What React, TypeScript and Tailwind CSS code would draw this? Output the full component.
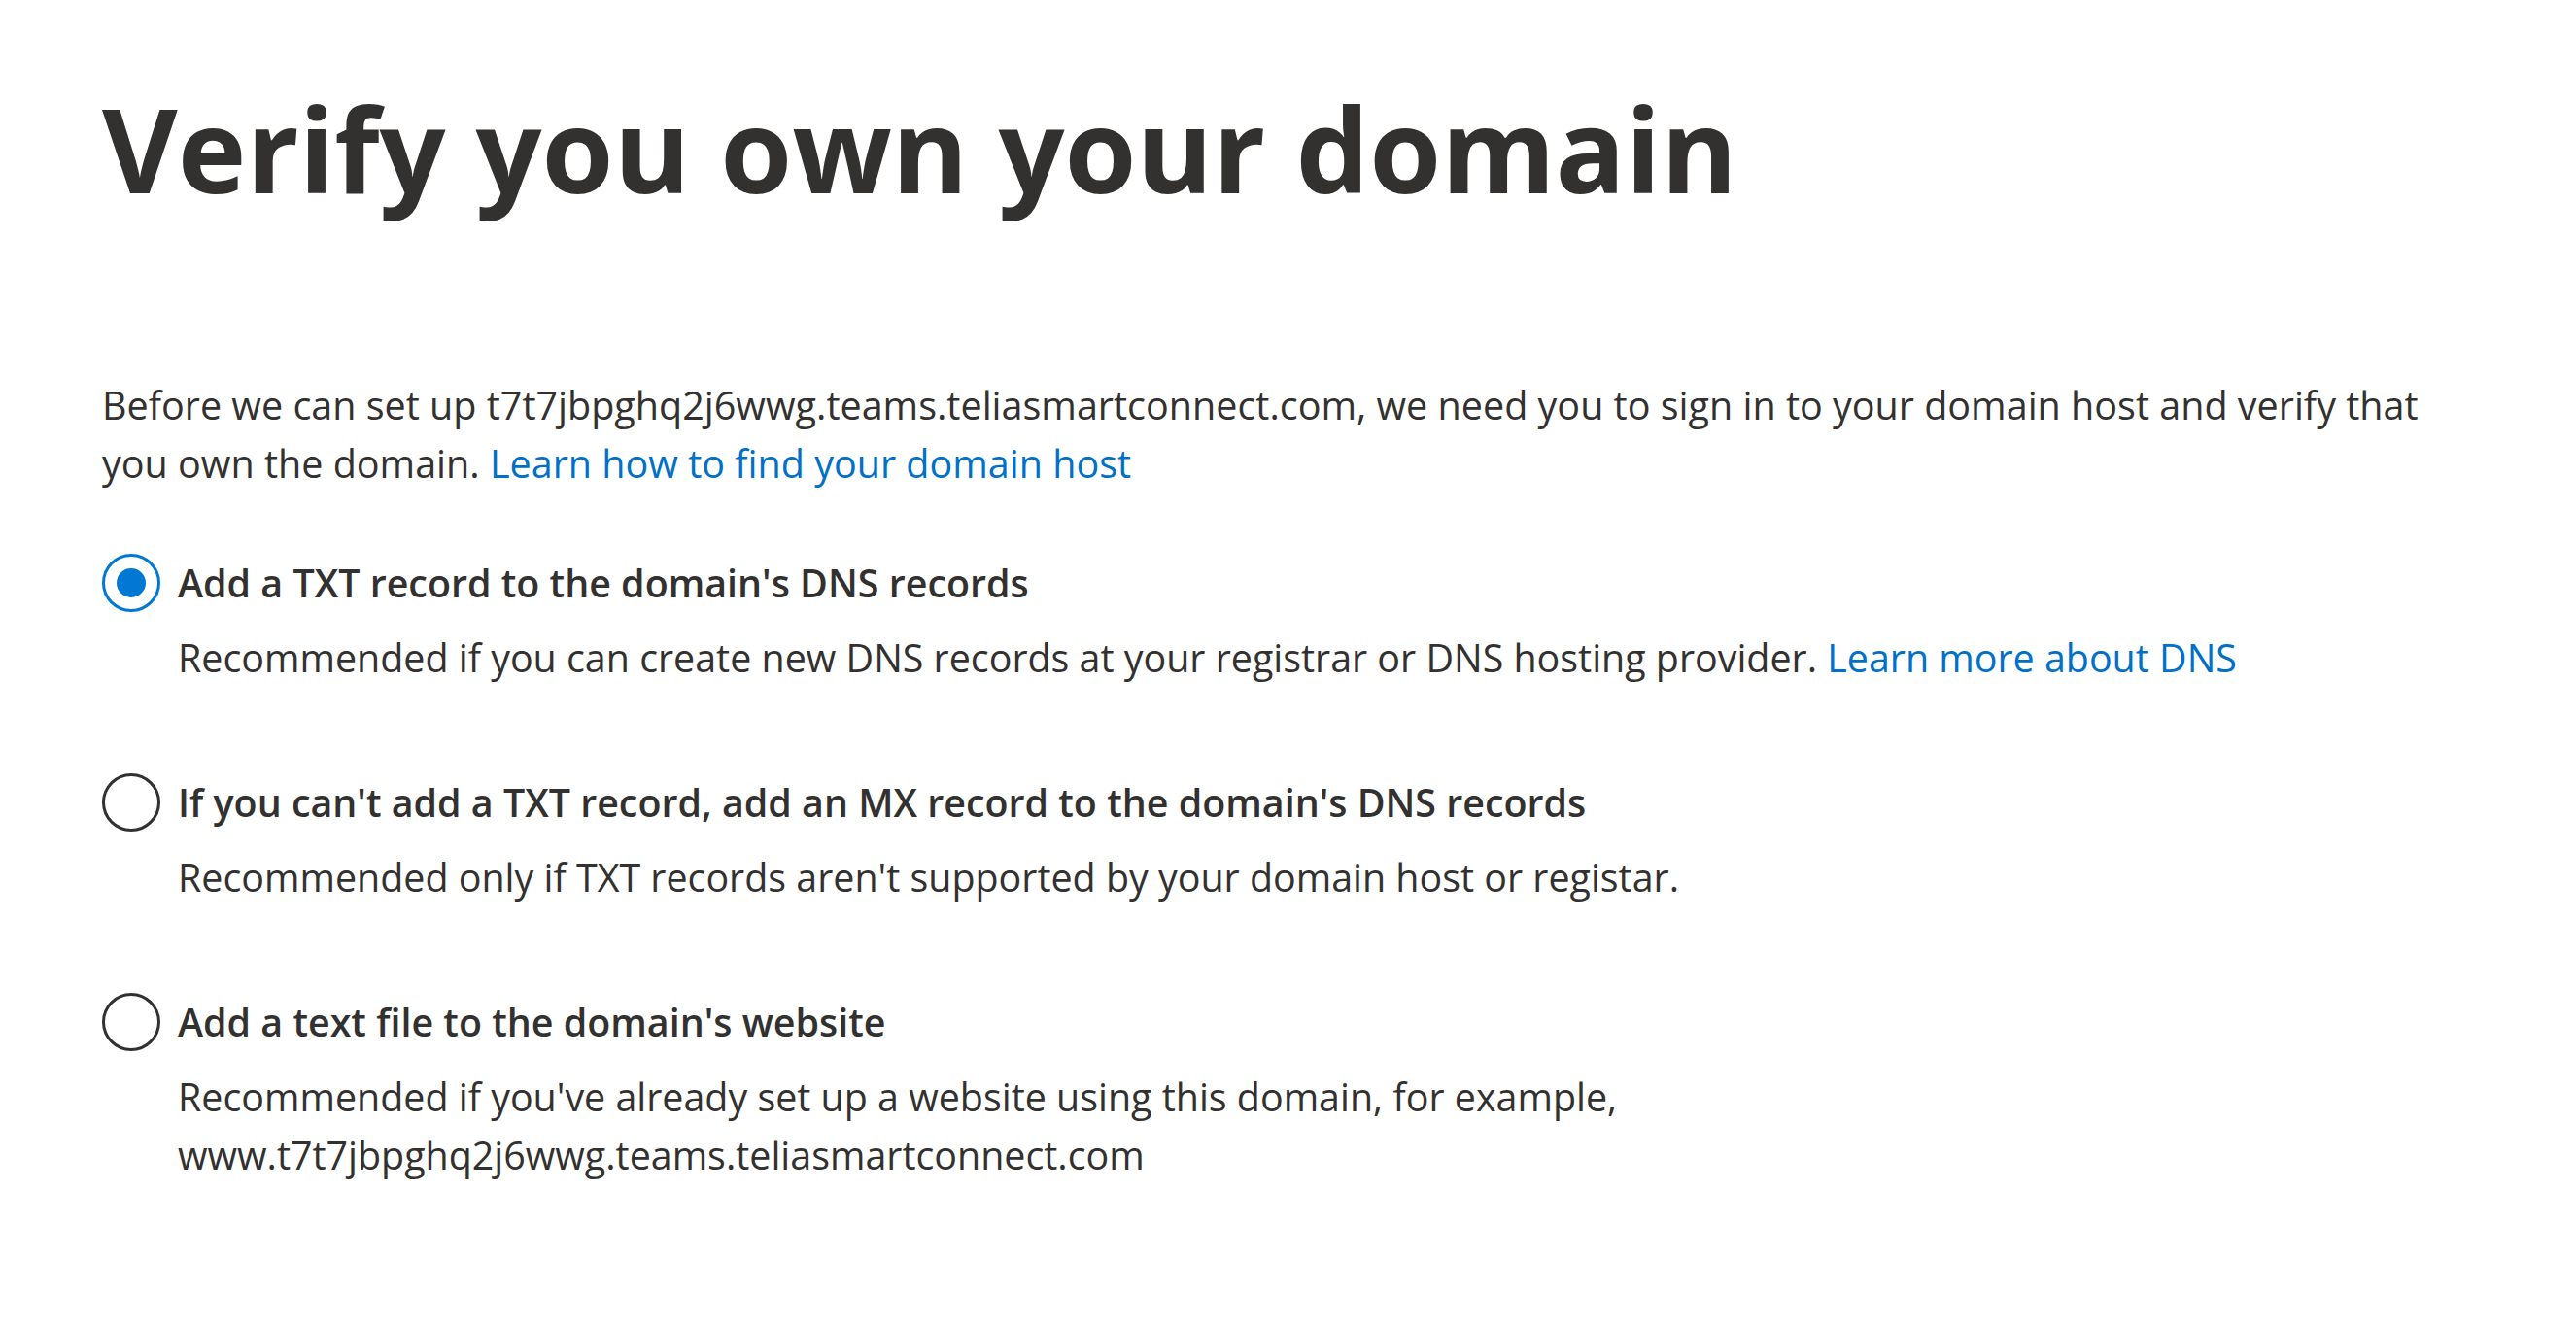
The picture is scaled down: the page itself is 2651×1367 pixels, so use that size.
import { useState } from "react";

type Option = {
  id: string;
  label: string;
  description: React.ReactNode;
};

const domain = "t7t7jbpghq2j6wwg.teams.teliasmartconnect.com";

const options: Option[] = [
  {
    id: "txt",
    label: "Add a TXT record to the domain's DNS records",
    description: (
      <>
        Recommended if you can create new DNS records at your registrar or DNS hosting provider.{" "}
        <a href="#" className="text-[#0070c8]">
          Learn more about DNS
        </a>
      </>
    ),
  },
  {
    id: "mx",
    label: "If you can't add a TXT record, add an MX record to the domain's DNS records",
    description: "Recommended only if TXT records aren't supported by your domain host or registar.",
  },
  {
    id: "file",
    label: "Add a text file to the domain's website",
    description: `Recommended if you've already set up a website using this domain, for example, www.${domain}`,
  },
];

function Radio({ checked }: { checked: boolean }) {
  return (
    <span
      className={
        checked
          ? "flex h-[60px] w-[60px] shrink-0 items-center justify-center rounded-full border-[3px] border-[#0078d4]"
          : "flex h-[60px] w-[60px] shrink-0 items-center justify-center rounded-full border-[3px] border-[#323130]"
      }
    >
      {checked && <span className="h-[30px] w-[30px] rounded-full bg-[#0078d4]" />}
    </span>
  );
}

export default function App() {
  const [method, setMethod] = useState("txt");

  return (
    <div className="min-h-screen bg-white pl-[105px] pt-[75px] font-['Open_Sans',sans-serif] text-[#323130]">
      <h1 className="text-[119.6px] font-bold leading-[156px]">Verify you own your domain</h1>

      <p className="mt-[156px] max-w-[2420px] text-[39.5px] leading-[60px]">
        Before we can set up {domain}, we need you to sign in to your domain host and verify that you
        own the domain.{" "}
        <a href="#" className="text-[#0070c8]">
          Learn how to find your domain host
        </a>
      </p>

      <div className="mt-[63px] flex flex-col gap-[89px]">
        {options.map((o) => (
          <div key={o.id}>
            <label
              className="flex cursor-pointer items-center gap-[18px]"
              onClick={() => setMethod(o.id)}
            >
              <Radio checked={method === o.id} />
              <span className="text-[39.4px] font-semibold leading-[60px]">{o.label}</span>
            </label>
            <p className="mt-[17px] max-w-[2360px] pl-[78px] text-[39.4px] leading-[60px]">
              {o.description}
            </p>
          </div>
        ))}
      </div>
    </div>
  );
}
